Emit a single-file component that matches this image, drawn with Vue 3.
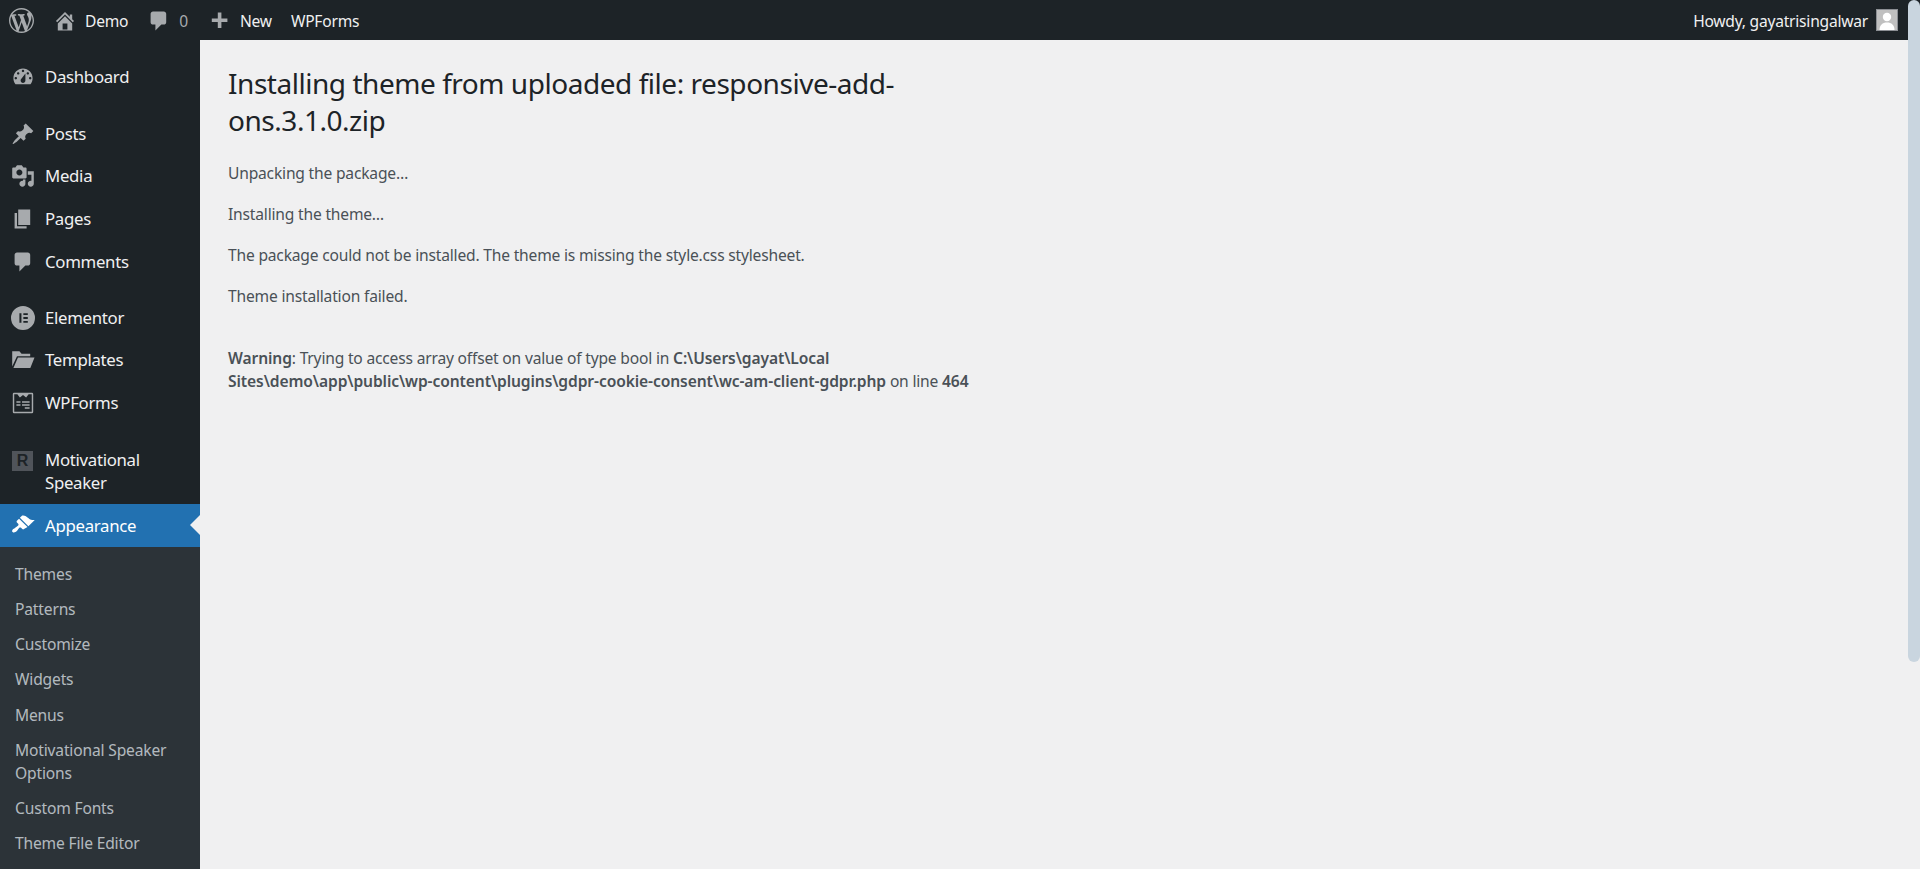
<script setup>
const icons = {
  dashboard: 'M3.76 16h12.48c1.1-1.37 1.76-3.11 1.76-5 0-4.42-3.58-8-8-8s-8 3.58-8 8c0 1.89.66 3.63 1.76 5zM10 4c.55 0 1 .45 1 1s-.45 1-1 1-1-.45-1-1 .45-1 1-1zM6 6c.55 0 1 .45 1 1s-.45 1-1 1-1-.45-1-1 .45-1 1-1zm8 0c.55 0 1 .45 1 1s-.45 1-1 1-1-.45-1-1 .45-1 1-1zm-5.37 5.55L12 7v6c0 1.1-.9 2-2 2s-2-.9-2-2c0-.57.24-1.08.63-1.45zM4 10c.55 0 1 .45 1 1s-.45 1-1 1-1-.45-1-1 .45-1 1-1zm12 0c.55 0 1 .45 1 1s-.45 1-1 1-1-.45-1-1 .45-1 1-1z',
  post: 'M10.44 3.02l1.82-1.82 6.36 6.35-1.83 1.82c-1.05-.68-2.48-.57-3.41.36l-.75.75c-.92.93-1.04 2.35-.35 3.41l-1.83 1.82-2.41-2.41-2.8 2.79c-.42.42-3.38 2.71-3.8 2.29s1.86-3.39 2.28-3.81l2.79-2.79L4.1 9.36l1.83-1.82c1.05.69 2.48.57 3.4-.36l.75-.75c.93-.92 1.05-2.35.36-3.41z',
  media: 'M13 11V4c0-.55-.45-1-1-1h-1.67L9 1H5L3.67 3H2c-.55 0-1 .45-1 1v7c0 .55.45 1 1 1h10c.55 0 1-.45 1-1zM7 4.5c1.38 0 2.5 1.12 2.5 2.5S8.38 9.5 7 9.5 4.5 8.38 4.5 7 5.62 4.5 7 4.5zM14 6h5v10.5c0 1.38-1.12 2.5-2.5 2.5S14 17.88 14 16.5s1.12-2.5 2.5-2.5c.17 0 .34.02.5.05V9h-3V6zm-4 8.05V13h2v3.5c0 1.38-1.12 2.5-2.5 2.5S7 17.88 7 16.5 8.12 14 9.5 14c.17 0 .34.02.5.05z',
  page: 'M6 15V2h10v13H6zm-1 1h8v2H3V5h2v11z',
  comment: 'M5 2h9c1.1 0 2 .9 2 2v7c0 1.1-.9 2-2 2h-2l-5 5v-5H5c-1.1 0-2-.9-2-2V4c0-1.1.9-2 2-2z',
  elementor: 'M10 0a10 10 0 1 0 0 20 10 10 0 0 0 0-20zM7 6h1.7v8H7zM10.3 6H14v1.6h-3.7zM10.3 9.2H14v1.6h-3.7zM10.3 12.4H14V14h-3.7z',
  folder: 'M1 2.8h6l1.8 2H16v2H5L1 15.5zM5.8 8H19.6l-3.5 8.7H2z',
  forms: 'M2.5 1.500h15a1 1 0 0 1 1 1v15a1 1 0 0 1-1 1h-15a1 1 0 0 1-1-1v-15a1 1 0 0 1 1-1zM2.700 2.700v14.600h14.600V2.700h-2.600L12.600 5.400 10 3.400 7.400 5.400 5.300 2.700zM4.500 8.500h3.400v1.200H4.500zM9.200 8.500h6.300v1.200H9.200zM4.500 11h3.400v1.200H4.500zM9.200 11h6.300v1.200H9.200zM11.500 13.600h4v1.200h-4z',
  brush: 'M14.48 11.06L7.41 3.99l1.5-1.5c.5-.56 2.3-.47 3.51.32 1.21.8 1.43 1.28 2.91 2.1 1.18.64 2.45 1.26 4.45.85zm-.71.71L6.7 4.7 4.93 6.47c-.39.39-.39 1.02 0 1.41l1.06 1.06c.39.39.39 1.03 0 1.42-.6.6-1.43 1.11-2.21 1.69-.35.26-.7.53-1.01.84C1.43 13.23.4 14.96 1.37 15.93c.98.98 2.7-.06 3.05-.41.31-.31.58-.66.84-1.01.58-.78 1.09-1.61 1.69-2.21.39-.39 1.02-.39 1.41 0l1.06 1.06c.39.39 1.02.39 1.41 0z',
  wp: 'M20 10c0-5.51-4.49-10-10-10C4.48 0 0 4.49 0 10c0 5.52 4.48 10 10 10 5.51 0 10-4.48 10-10zM7.78 15.37L4.37 6.22c.55-.02 1.17-.08 1.17-.08.5-.06.44-1.13-.06-1.11 0 0-1.45.11-2.37.11-.18 0-.37 0-.58-.01C4.12 2.69 6.87 1.11 10 1.11c2.33 0 4.45.87 6.05 2.34-.68-.11-1.65.39-1.65 1.58 0 .74.45 1.36.9 2.1.35.61.55 1.36.55 2.46 0 1.49-1.4 5-1.4 5l-3.03-8.37c.54-.02.82-.17.82-.17.5-.05.44-1.25-.06-1.22 0 0-1.44.12-2.38.12-.87 0-2.33-.12-2.33-.12-.5-.03-.56 1.2-.06 1.22l.92.08 1.26 3.41zM17.41 10c.24-.64.74-1.87.43-4.25.7 1.29 1.05 2.71 1.05 4.25 0 3.29-1.73 6.24-4.4 7.78.97-2.59 1.94-5.2 2.92-7.78zM6.1 18.09C3.12 16.65 1.11 13.53 1.11 10c0-1.3.23-2.48.72-3.59C3.25 10.3 4.67 14.2 6.1 18.09zm4.03-6.63l2.58 6.98c-.86.29-1.76.45-2.71.45-.79 0-1.57-.11-2.29-.33.81-2.38 1.62-4.74 2.42-7.1z',
  home: 'M16 8.5l1.53 1.53-1.06 1.06L10 4.62l-6.47 6.47-1.06-1.06L10 2.5l4 4v-2h2v4zm-6-2.46l6 5.99V18H4v-5.97zM12 17v-5H8v5h4z',
  plus: 'M17 7v3h-5v5H9v-5H4V7h5V2h3v5h5z',
}

const groups = [
  { cls: 'g1', items: [{ label: 'Dashboard', icon: 'dashboard' }] },
  { cls: 'g2', items: [
    { label: 'Posts', icon: 'post' },
    { label: 'Media', icon: 'media' },
    { label: 'Pages', icon: 'page' },
    { label: 'Comments', icon: 'comment' },
  ] },
  { cls: 'g3', items: [
    { label: 'Elementor', icon: 'elementor' },
    { label: 'Templates', icon: 'folder' },
    { label: 'WPForms', icon: 'forms' },
  ] },
]

const submenu = [
  'Themes', 'Patterns', 'Customize', 'Widgets', 'Menus',
  'Motivational Speaker Options', 'Custom Fonts', 'Theme File Editor',
]

const messages = [
  'Unpacking the package…',
  'Installing the theme…',
  'The package could not be installed. The theme is missing the style.css stylesheet.',
  'Theme installation failed.',
]
</script>

<template>
  <div class="page">
    <div class="frame">
      <header class="adminbar">
        <svg class="ic logo" viewBox="0 0 20 20"><path :d="icons.wp" fill-rule="evenodd" /></svg>
        <svg class="ic home" viewBox="0 0 20 20"><path :d="icons.home" fill-rule="evenodd" /></svg>
        <span class="bar-text demo">Demo</span>
        <svg class="ic bubble" viewBox="0 0 20 20"><path :d="icons.comment" /></svg>
        <span class="bar-text zero">0</span>
        <svg class="ic plus" viewBox="0 0 20 20"><path :d="icons.plus" /></svg>
        <span class="bar-text new">New</span>
        <span class="bar-text wpf">WPForms</span>
        <span class="bar-text howdy">Howdy, gayatrisingalwar</span>
        <span class="avatar">
          <svg viewBox="0 0 20 20"><circle cx="10" cy="7" r="4.2" fill="#fff" /><path d="M2.5 20c0-5 3-7.5 7.500-7.500s7.500 2.500 7.500 7.500z" fill="#fff" /></svg>
        </span>
      </header>
      <div class="body">
        <aside class="sidebar">
          <div v-for="g in groups" :key="g.cls" class="group" :class="g.cls">
            <a v-for="it in g.items" :key="it.label" class="item">
              <svg class="menu-ic" viewBox="0 0 20 20"><path :d="icons[it.icon]" fill-rule="evenodd" /></svg>
              <span>{{ it.label }}</span>
            </a>
          </div>
          <a class="item item-tall">
            <span class="r-logo">R</span>
            <span>Motivational Speaker</span>
          </a>
          <a class="item item-active">
            <svg class="menu-ic" viewBox="0 0 20 20"><path :d="icons.brush" /></svg>
            <span>Appearance</span>
            <i class="notch"></i>
          </a>
          <ul class="submenu">
            <li v-for="s in submenu" :key="s">{{ s }}</li>
          </ul>
        </aside>
        <main class="content">
          <h1>Installing theme from uploaded file: responsive-add-ons.3.1.0.zip</h1>
          <p v-for="m in messages" :key="m">{{ m }}</p>
          <p class="warning"><b>Warning</b>: Trying to access array offset on value of type bool in <b>C:\Users\gayat\Local Sites\demo\app\public\wp-content\plugins\gdpr-cookie-consent\wc-am-client-gdpr.php</b> on line <b>464</b></p>
        </main>
      </div>
    </div>
    <div class="track"><div class="thumb"></div></div>
  </div>
</template>

<style>
html, body { margin: 0; background: #f0f0f1; overflow: hidden; }
</style>

<style scoped>
.page {
  display: flex;
  height: 869px;
  overflow: hidden;
  font-family: "Noto Sans", "Open Sans", sans-serif;
  color: #4a5157;
  background: #f0f0f1;
}
.frame { flex: 1; min-width: 0; display: flex; flex-direction: column; }
.track { width: 12px; flex: none; background: linear-gradient(#1d2327 0 40px, #f0f0f1 40px); }
.thumb { height: 662px; background: #c9d5df; border-radius: 6px; }

.adminbar {
  height: 40px;
  flex: none;
  display: flex;
  align-items: center;
  background: #1d2327;
  color: #f0f0f1;
  padding-left: 9px;
}
.ic { fill: #a7aaad; display: block; flex: none; }
.logo { width: 25px; height: 25px; margin-top: 1px; }
.home { width: 24px; height: 24px; margin: 1px 0 0 19px; }
.bubble { width: 24px; height: 24px; margin: 1px 0 0 19px; }
.plus { width: 24px; height: 24px; margin: 4px 0 0 19px; }
.bar-text {
  font-size: 15.6px;
  letter-spacing: -0.23px;
  line-height: 38px;
  padding-top: 2px;
  white-space: nowrap;
}
.demo { margin-left: 8px; }
.zero { margin-left: 8px; color: #a7aaad; }
.new { margin-left: 9px; }
.wpf { margin-left: 19px; }
.howdy { margin-left: auto; }
.avatar {
  width: 22px;
  height: 22px;
  box-sizing: border-box;
  margin: 0 10px 0 8px;
  background: #c0c0c0;
  border: 1px solid #8c8f94;
  overflow: hidden;
  display: block;
}
.avatar svg { display: block; width: 100%; height: 100%; }

.body { flex: 1; display: flex; min-height: 0; }
.sidebar {
  width: 200px;
  flex: none;
  background: #1d2327;
  color: #f0f0f1;
  display: flex;
  flex-direction: column;
  overflow: hidden;
  padding-top: 15px;
  box-sizing: border-box;
  font-size: 16.8px;
  letter-spacing: -0.3px;
}
.group { display: flex; flex-direction: column; }
.g1 { margin-bottom: 14.2px; }
.g2 { margin-bottom: 12.8px; }
.g3 { margin-bottom: 14.4px; }
.item {
  height: 43px;
  flex: none;
  display: flex;
  align-items: center;
  position: relative;
  padding-left: 11px;
  line-height: 23px;
}
.g2 .item { height: 42.8px; }
.g3 .item { height: 42.8px; }
.item > span:last-of-type { position: relative; top: -0.5px; }
.item-active > span:last-of-type { top: 0; }
.menu-ic { width: 24px; height: 24px; fill: #a7aaad; margin-right: 10px; flex: none; display: block; }
.item-tall { height: 65px; padding-left: 0; }
.item-tall > span:last-child { width: 110px; }
.r-logo {
  width: 21px;
  height: 20px;
  background: #50545a;
  color: #1d2327;
  font: 700 16px/20px "Liberation Sans", sans-serif;
  text-align: center;
  margin: 12px 12px 0 12px;
  align-self: flex-start;
  flex: none;
  letter-spacing: 0;
}
.item-active { background: #2271b1; color: #fff; }
.item-active .menu-ic { fill: #fff; }
.notch {
  position: absolute;
  right: 0;
  top: 50%;
  margin-top: -10px;
  border: 10px solid transparent;
  border-left-width: 0;
  border-right-color: #f0f0f1;
}
.submenu {
  list-style: none;
  margin: 0;
  padding: 10px 0 0 15px;
  flex: 1;
  background: #2c3338;
  color: rgba(240, 246, 252, 0.7);
  font-size: 15.6px;
  letter-spacing: -0.17px;
}
.submenu li { padding: 6px 10px 6px 0; line-height: 23.15px; }

.content { flex: 1; min-width: 0; padding: 25px 0 0 28px; font-size: 15.6px; line-height: 23px; }
.content > * { max-width: 770px; }
h1 {
  margin: 0 0 23px;
  font-size: 28px;
  line-height: 37px;
  font-weight: 400;
  color: #1d2327;
  letter-spacing: -0.46px;
}
p { margin: 0 0 18px; letter-spacing: -0.19px; }
.warning { margin-top: 39px; max-width: 780px; }
b { font-weight: 600; letter-spacing: -0.1px; }
</style>
